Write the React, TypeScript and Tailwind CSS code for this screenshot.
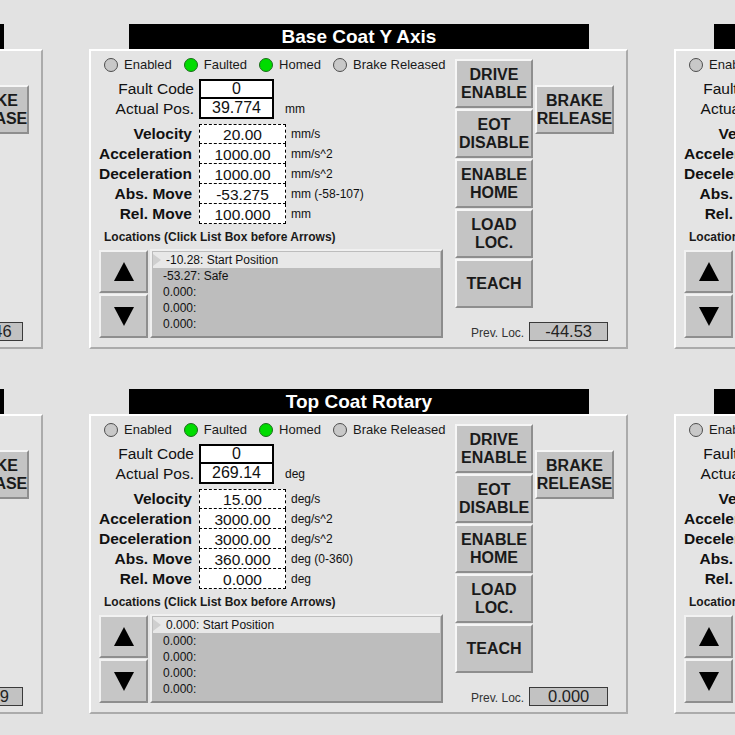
import React from "react";

type Axis = {
  title: string;
  fault: string;
  actual: string;
  actualU: string;
  rows: { label: string; value: string; unit: string }[];
  locs: string[];
  prev: string;
};

const mk = (
  title: string,
  actual: string,
  u: string,
  vel: string,
  acc: string,
  abs: string,
  absU: string,
  rel: string,
  locs: string[],
  prev: string
): Axis => ({
  title,
  fault: "0",
  actual,
  actualU: u,
  rows: [
    { label: "Velocity", value: vel, unit: `${u}/s` },
    { label: "Acceleration", value: acc, unit: `${u}/s^2` },
    { label: "Deceleration", value: acc, unit: `${u}/s^2` },
    { label: "Abs. Move", value: abs, unit: absU },
    { label: "Rel. Move", value: rel, unit: u },
  ],
  locs,
  prev,
});

const topRow: Axis[] = [
  mk("Base Coat X Axis", "12.500", "mm", "20.00", "1000.00", "-35.460", "mm (-40-300)", "100.000", ["0.000: Start Position", "0.000:", "0.000:", "0.000:", "0.000:"], "-135.46"),
  mk("Base Coat Y Axis", "39.774", "mm", "20.00", "1000.00", "-53.275", "mm (-58-107)", "100.000", ["-10.28: Start Position", "-53.27: Safe", "0.000:", "0.000:", "0.000:"], "-44.53"),
  mk("Base Coat Z Axis", "0.000", "mm", "20.00", "1000.00", "0.000", "mm (0-100)", "10.000", ["0.000: Start Position", "0.000:", "0.000:", "0.000:", "0.000:"], "0.000"),
];

const bottomRow: Axis[] = [
  mk("Base Coat Rotary", "269.09", "deg", "15.00", "3000.00", "360.000", "deg (0-360)", "0.000", ["0.000: Start Position", "0.000:", "0.000:", "0.000:", "0.000:"], "269.09"),
  mk("Top Coat Rotary", "269.14", "deg", "15.00", "3000.00", "360.000", "deg (0-360)", "0.000", ["0.000: Start Position", "0.000:", "0.000:", "0.000:", "0.000:"], "0.000"),
  mk("Top Coat Z Axis", "0.000", "mm", "20.00", "1000.00", "0.000", "mm (0-100)", "10.000", ["0.000: Start Position", "0.000:", "0.000:", "0.000:", "0.000:"], "0.000"),
];

function Lamp({ on, label }: { on: boolean; label: string }) {
  return (
    <div className="flex items-center gap-[6px]">
      <span
        className={
          on
            ? "w-[14px] h-[14px] rounded-full border border-[#1d6b1d] bg-[#00dc00]"
            : "w-[14px] h-[14px] rounded-full border border-[#4d4d4d] bg-[#c8c8c8]"
        }
      />
      <span className="text-[13px] leading-[14px] text-[#1a1a1a] whitespace-nowrap">{label}</span>
    </div>
  );
}

function Btn({ lines, className = "" }: { lines: string[]; className?: string }) {
  return (
    <div
      className={
        "w-[78px] h-[49px] bg-[#c4c4c4] border-2 border-t-[#f6f6f6] border-l-[#f6f6f6] border-r-[#8e8e8e] border-b-[#8e8e8e] flex flex-col items-center justify-center text-[16px] leading-[18px] font-bold text-[#1a1a1a] " +
        className
      }
    >
      {lines.map((l) => (
        <span key={l}>{l}</span>
      ))}
    </div>
  );
}

function ArrowBtn({ up, h }: { up: boolean; h: string }) {
  return (
    <div
      className={
        "w-[49px] bg-[#c6c6c6] border-2 border-t-[#f2f2f2] border-l-[#f2f2f2] border-r-[#8e8e8e] border-b-[#8e8e8e] flex items-center justify-center " +
        h
      }
    >
      <svg width="20" height="19" viewBox="0 0 20 19">
        {up ? <polygon points="10,0 20,19 0,19" fill="#000" /> : <polygon points="0,0 20,0 10,19" fill="#000" />}
      </svg>
    </div>
  );
}

function Panel({ a }: { a: Axis }) {
  return (
    <div className="w-[539px] shrink-0 flex flex-col">
      <div className="ml-[40px] w-[460px] h-[25px] bg-black text-white font-bold text-[19px] leading-[25px] text-center whitespace-nowrap">
        {a.title}
      </div>
      <div className="h-[300px] bg-[#e4e4e4] border-2 border-t-white border-l-white border-r-[#ababab] border-b-[#ababab] flex pl-[8px] text-[#111]">
        {/* left column */}
        <div className="w-[356px] flex flex-col">
          <div className="mt-[7px] ml-[5px] flex items-center gap-[12px]">
            <Lamp on={false} label="Enabled" />
            <Lamp on={true} label="Faulted" />
            <Lamp on={true} label="Homed" />
            <Lamp on={false} label="Brake Released" />
          </div>

          <div className="mt-[7px] flex flex-col">
            <div className="flex items-center h-[20px]">
              <div className="w-[100px] pr-[5px] text-right text-[15.5px] leading-[20px] whitespace-nowrap">Fault Code</div>
              <div className="w-[75px] h-[20px] border-2 border-black bg-white flex items-center justify-center text-[16px]">
                {a.fault}
              </div>
            </div>
            <div className="flex items-center h-[19px]">
              <div className="w-[100px] pr-[5px] text-right text-[15.5px] leading-[19px] whitespace-nowrap">Actual Pos.</div>
              <div className="w-[75px] h-[20px] border-2 border-t-0 border-black bg-white flex items-center justify-center text-[16px]">
                {a.actual}
              </div>
              <div className="ml-[11px] text-[12px]">{a.actualU}</div>
            </div>
          </div>

          <div className="mt-[6px] flex flex-col">
            {a.rows.map((r, i) => (
              <div key={r.label} className="flex items-center h-[20px]">
                <div className="w-[100px] pr-[7px] text-right font-bold text-[15.5px] leading-[20px] whitespace-nowrap flex justify-end">
                  {r.label}
                </div>
                <div
                  className={
                    i === 0
                      ? "w-[87px] h-[20px] border border-dashed border-black bg-white flex items-center justify-center text-[15.5px] pt-[2px]"
                      : "w-[87px] h-[20px] border border-t-0 border-dashed border-black bg-white flex items-center justify-center text-[15.5px] pt-[2px]"
                  }
                >
                  {r.value}
                </div>
                <div className="ml-[5px] text-[12px] whitespace-nowrap">{r.unit}</div>
              </div>
            ))}
          </div>

          <div className="mt-[6px] ml-[5px] text-[12px] leading-[14px] font-bold whitespace-nowrap text-[#1a1a1a]">
            Locations (Click List Box before Arrows)
          </div>

          <div className="mt-[6px] flex">
            <div className="flex flex-col gap-[1px]">
              <ArrowBtn up={true} h="h-[43px]" />
              <ArrowBtn up={false} h="h-[44px]" />
            </div>
            <div className="ml-[2px] -mt-[1px] w-[293px] h-[89px] bg-[#bdbdbd] border-2 border-t-[#f0f0f0] border-l-[#f0f0f0] border-r-[#8c8c8c] border-b-[#8c8c8c] pt-[1px] flex flex-col text-[12px] leading-[16px] text-[#111]">
              {a.locs.map((l, i) =>
                i === 0 ? (
                  <div key={i} className="relative h-[16px] ml-[1px] mr-[1px] bg-[#e8e8e8] pl-[13px] whitespace-nowrap">
                    <svg className="absolute left-0 top-[2px]" width="8" height="12" viewBox="0 0 8 12">
                      <polygon points="0,0 8,6 0,12" fill="#cfcfcf" />
                    </svg>
                    {l}
                  </div>
                ) : (
                  <div key={i} className="h-[16px] pl-[11px] whitespace-nowrap">
                    {l}
                  </div>
                )
              )}
            </div>
          </div>
        </div>

        {/* right area */}
        <div className="flex flex-col">
          <div className="flex mt-[8px]">
            <div className="flex flex-col gap-[1px]">
              <Btn lines={["DRIVE", "ENABLE"]} />
              <Btn lines={["EOT", "DISABLE"]} />
              <Btn lines={["ENABLE", "HOME"]} />
              <Btn lines={["LOAD", "LOC."]} />
              <Btn lines={["TEACH"]} />
            </div>
            <div className="ml-[2px] mt-[26px]">
              <Btn lines={["BRAKE", "RELEASE"]} className="w-[79px] h-[48px]" />
            </div>
          </div>
          <div className="mt-[12px] flex items-center">
            <span className="ml-[16px] mt-[4px] text-[12px] text-[#333] whitespace-nowrap">Prev. Loc.</span>
            <div className="ml-[5px] w-[79px] h-[19px] bg-[#c2c2c2] border border-[#3a3a3a] flex justify-center text-[16.5px] leading-[16px] text-[#222]">
              {a.prev}
            </div>
          </div>
        </div>
      </div>
    </div>
  );
}

export default function App() {
  return (
    <div className="w-[735px] h-[735px] overflow-hidden bg-[#e2e2e2] font-['Liberation_Sans',Arial,sans-serif]">
      <div className="flex flex-col pt-[24px] gap-[40px] -ml-[496px]">
        <div className="flex gap-[46px]">
          {topRow.map((a) => (
            <Panel key={a.title} a={a} />
          ))}
        </div>
        <div className="flex gap-[46px]">
          {bottomRow.map((a) => (
            <Panel key={a.title} a={a} />
          ))}
        </div>
      </div>
    </div>
  );
}
